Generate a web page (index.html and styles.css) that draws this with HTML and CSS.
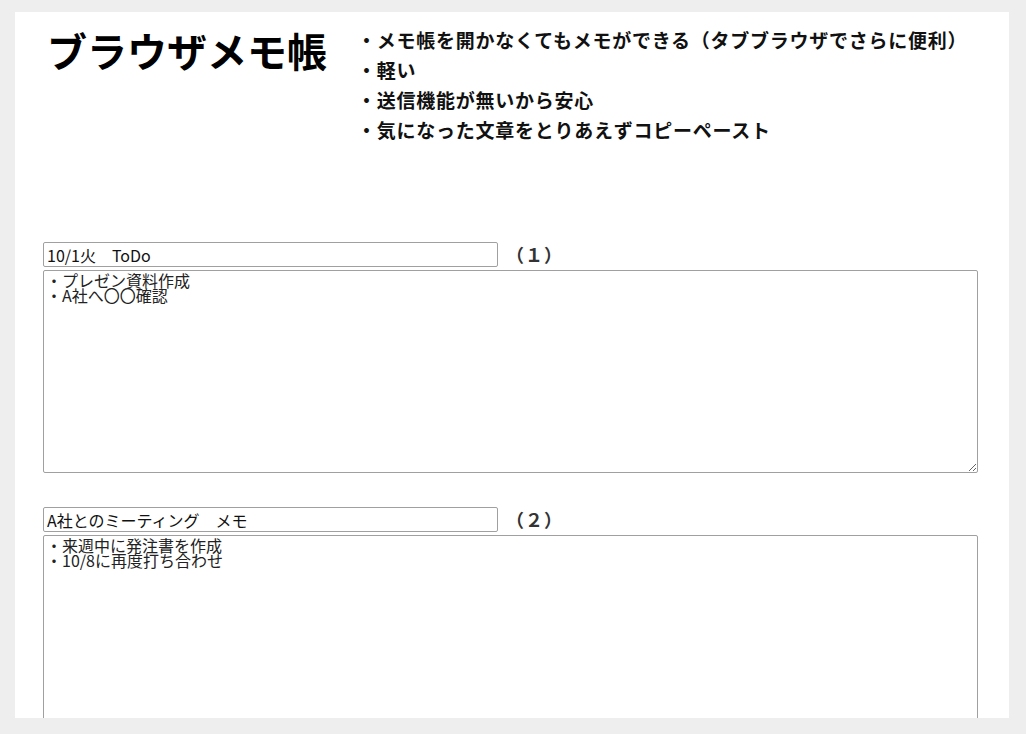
FILE: index.html
```html
<!DOCTYPE html>
<html lang="ja">
<head>
<meta charset="utf-8">
<title>ブラウザメモ帳</title>
<link rel="stylesheet" href="styles.css">
</head>
<body>
<div class="panel">
  <header class="header">
    <h1 class="title">ブラウザメモ帳</h1>
    <ul class="features">
      <li>・メモ帳を開かなくてもメモができる（タブブラウザでさらに便利）</li>
      <li>・軽い</li>
      <li>・送信機能が無いから安心</li>
      <li>・気になった文章をとりあえずコピーペースト</li>
    </ul>
  </header>
  <main class="memos">
    <section class="memo">
      <div class="memo-head">
        <input class="memo-title" type="text" value="10/1火　ToDo">
        <span class="memo-num">（１）</span>
      </div>
      <textarea class="memo-body">・プレゼン資料作成
・A社へ〇〇確認</textarea>
    </section>
    <section class="memo">
      <div class="memo-head">
        <input class="memo-title" type="text" value="A社とのミーティング　メモ">
        <span class="memo-num">（２）</span>
      </div>
      <textarea class="memo-body">・来週中に発注書を作成
・10/8に再度打ち合わせ</textarea>
    </section>
  </main>
</div>
</body>
</html>
```
FILE: styles.css
```css
html, body {
  margin: 0;
  padding: 0;
  background: #eeeeee;
}
body {
  padding-top: 12px;
  font-family: "Noto Sans CJK JP", "Noto Sans", sans-serif;
}
.panel {
  margin-left: 15px;
  width: 994px;
  height: 706px;
  overflow: hidden;
  background: #ffffff;
  box-sizing: border-box;
}
.header {
  display: flex;
  align-items: flex-start;
  padding: 13px 0 0 32px;
}
.title {
  margin: 5px 0 0 0;
  font-size: 40px;
  line-height: 40px;
  font-weight: bold;
  color: #000;
}
.features {
  list-style: none;
  margin: 0 0 0 30px;
  padding: 0;
  font-size: 19px;
  line-height: 30px;
  font-weight: bold;
  letter-spacing: 0.75px;
  color: #111;
}
.memos {
  padding: 97px 0 0 28px;
}
.memo {
  margin-bottom: 34px;
}
.memo-head {
  display: flex;
  align-items: center;
  height: 25px;
  margin-bottom: 3px;
}
.memo-title {
  width: 455px;
  height: 25px;
  box-sizing: border-box;
  margin: 0;
  padding: 0 3px;
  border: 1px solid #a0a0a0;
  border-radius: 2px;
  font-family: "Noto Sans CJK JP", "Noto Sans", sans-serif;
  font-size: 16px;
  color: #111;
  outline: none;
}
.memo-num {
  margin-left: 8px;
  font-size: 18px;
  line-height: 25px;
  font-weight: bold;
  letter-spacing: 1px;
  color: #333;
}
.memo-body {
  display: block;
  width: 935px;
  height: 203px;
  box-sizing: border-box;
  margin: 0;
  padding: 2px;
  border: 1px solid #a0a0a0;
  border-radius: 2px;
  font-family: "Noto Sans CJK JP", "Noto Sans", sans-serif;
  font-size: 16px;
  line-height: 15px;
  color: #222;
  outline: none;
}
```
